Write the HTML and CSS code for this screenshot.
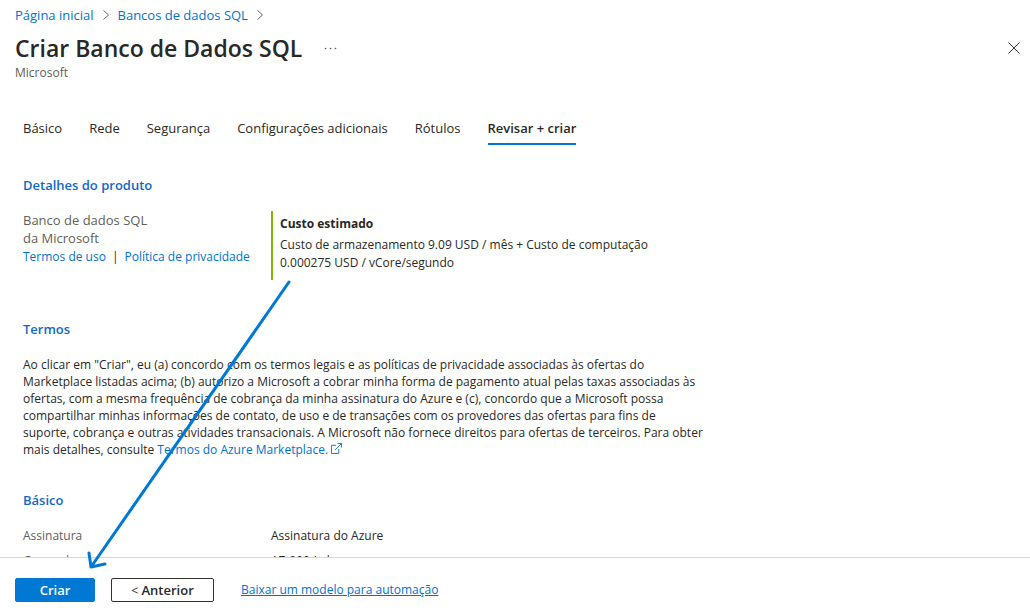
FILE: index.html
```html
<!DOCTYPE html>
<html lang="pt-BR">
<head>
<meta charset="utf-8">
<title>Criar Banco de Dados SQL</title>
<link rel="stylesheet" href="styles.css">
</head>
<body>
<div class="page">
  <header class="header">
    <nav class="breadcrumb" aria-label="Navegação">
      <a href="#">Página inicial</a>
      <svg class="chevron" viewBox="0 0 8 12"><path d="M1.5 1.5 6.5 6l-5 4.500"/></svg>
      <a href="#">Bancos de dados SQL</a>
      <svg class="chevron" viewBox="0 0 8 12"><path d="M1.5 1.5 6.5 6l-5 4.500"/></svg>
    </nav>
    <div class="title-row">
      <h1>Criar Banco de Dados SQL</h1>
      <button class="icon-button" type="button" aria-label="Mais"><svg class="more" viewBox="0 0 13 3"><circle cx="1.500" cy="1.500" r=".8"/><circle cx="6.500" cy="1.500" r=".8"/><circle cx="11.500" cy="1.500" r=".8"/></svg></button>
      <button class="icon-button close" type="button" aria-label="Fechar"><svg viewBox="0 0 12 12"><path d="M.5.5l11 11M11.500.5l-11 11"/></svg></button>
    </div>
    <p class="subtitle">Microsoft</p>
  </header>

  <main class="content">
    <nav class="tabs" aria-label="Etapas">
      <a href="#">Básico</a>
      <a href="#">Rede</a>
      <a href="#">Segurança</a>
      <a href="#">Configurações adicionais</a>
      <a href="#">Rótulos</a>
      <a href="#" class="active" aria-current="page">Revisar + criar</a>
    </nav>

    <section class="section product">
      <h2>Detalhes do produto</h2>
      <div class="columns">
        <div class="offer">
          <p>Banco de dados SQL<br>da Microsoft</p>
          <p class="links"><a href="#">Termos de uso</a><span>|</span><a href="#">Política de privacidade</a></p>
        </div>
        <div class="cost">
          <h3>Custo estimado</h3>
          <p>Custo de armazenamento 9.09 USD / mês + Custo de computação<br>0.000275 USD / vCore/segundo</p>
        </div>
      </div>
    </section>

    <section class="section terms">
      <h2>Termos</h2>
      <p>Ao clicar em "Criar", eu (a) concordo com os termos legais e as políticas de privacidade associadas às ofertas do<br>Marketplace listadas acima; (b) autorizo a Microsoft a cobrar minha forma de pagamento atual pelas taxas associadas às<br>ofertas, com a mesma frequência de cobrança da minha assinatura do Azure e (c), concordo que a Microsoft possa<br>compartilhar minhas informações de contato, de uso e de transações com os provedores das ofertas para fins de<br>suporte, cobrança e outras atividades transacionais. A Microsoft não fornece direitos para ofertas de terceiros. Para obter<br>mais detalhes, consulte <a href="#">Termos do Azure Marketplace. <svg class="external" viewBox="0 0 12 12"><path d="M5.500 2.500h-5v9h8v-5M7 .5h4.500V5M11.500.5 4.500 7.500"/></svg></a></p>
    </section>

    <section class="section basics">
      <h2>Básico</h2>
      <dl class="details">
        <dt>Assinatura</dt><dd>Assinatura do Azure</dd>
        <dt>Grupo de recursos</dt><dd>AZ-900-Lab</dd>
      </dl>
    </section>
  </main>

  <footer class="footer">
    <button class="button primary" type="button">Criar</button>
    <button class="button" type="button"><span class="back">&lt;</span> Anterior</button>
    <a href="#">Baixar um modelo para automação</a>
  </footer>

  <svg class="arrow" viewBox="0 0 206 292"><path d="M202 3 4 288M2 274l2 14 14-3"/></svg>
</div>
</body>
</html>
```
FILE: styles.css
```css
* { box-sizing: border-box; }
body { margin: 0; background: #fff; color: #292827; font: 13px/18px "Segoe UI", "Open Sans", "Noto Sans", sans-serif; }
h1, h2, h3, p, dl, dd { margin: 0; }
a { color: #0072d0; text-decoration: none; }
svg { fill: none; stroke: currentColor; }
button { font: inherit; color: inherit; cursor: pointer; }

.page { position: relative; display: flex; flex-direction: column; height: 100vh; overflow: hidden; }

.header { flex: none; padding: 6px 9px 0 15px; }
.breadcrumb { display: flex; align-items: center; gap: 8px; }
.chevron { width: 8px; height: 12px; color: #666; }
.title-row { display: flex; align-items: center; height: 32px; margin-top: 8px; }
h1 { font-size: 23px; line-height: 32px; font-weight: 600; }
.icon-button { display: flex; padding: 0; border: 0; background: none; margin-left: 22px; }
.more { width: 13px; height: 3px; fill: #555; stroke: none; }
.close { margin-left: auto; }
.close svg { width: 14px; height: 12px; color: #333; }
.subtitle { font-size: 12px; line-height: 18px; color: #605e5c; }

.content { flex: 1; min-height: 0; overflow: hidden; padding: 36px 23px 0; }
.tabs { display: flex; gap: 27px; }
.tabs a { color: inherit; line-height: 20px; padding-bottom: 5px; border-bottom: 2px solid transparent; white-space: nowrap; }
.tabs .active { font-weight: 600; border-color: #0078d4; }

.section { padding-top: 31px; }
h2 { font-size: 13px; line-height: 18px; font-weight: 600; color: #1068c8; }
.columns { display: grid; grid-template-columns: 248px 1fr; margin-top: 17px; }
.offer { color: #605e5c; white-space: nowrap; }
.links { display: flex; gap: 6px; font-size: 12px; line-height: 20px; color: #292827; }
.cost { border-left: 2px solid #7fba00; padding: 4px 0 8px 7px; font-size: 12px; }
h3 { font-size: 12px; line-height: 18px; font-weight: 700; margin-bottom: 3px; }
.terms { padding-top: 40px; }
.terms p { margin-top: 18px; font-size: 12px; line-height: 17px; white-space: nowrap; }
.basics { padding-top: 33px; }
.external { width: 11px; height: 11px; }
.details { display: grid; grid-template-columns: 248px 1fr; row-gap: 7px; margin-top: 18px; font-size: 12px; }
.details dt { color: #605e5c; }

.footer { flex: none; display: flex; align-items: center; gap: 16px; padding: 20px 15px 12px; border-top: 1px solid #d6d6d6; }
.button { height: 24px; min-width: 103px; padding: 0 8px; border: 1px solid #323130; border-radius: 2px; background: #fff; line-height: 20px; font-weight: 600; }
.primary { min-width: 80px; border-color: #0078d4; background: #0078d4; color: #fff; }
.back { font-size: 12px; font-weight: 400; }
.footer a { margin-left: 11px; font-size: 12px; text-decoration: underline; }

.arrow { position: absolute; left: 87px; top: 279px; width: 206px; height: 292px; color: #0078d7; stroke-width: 3; stroke-linecap: round; stroke-linejoin: round; pointer-events: none; }
```
